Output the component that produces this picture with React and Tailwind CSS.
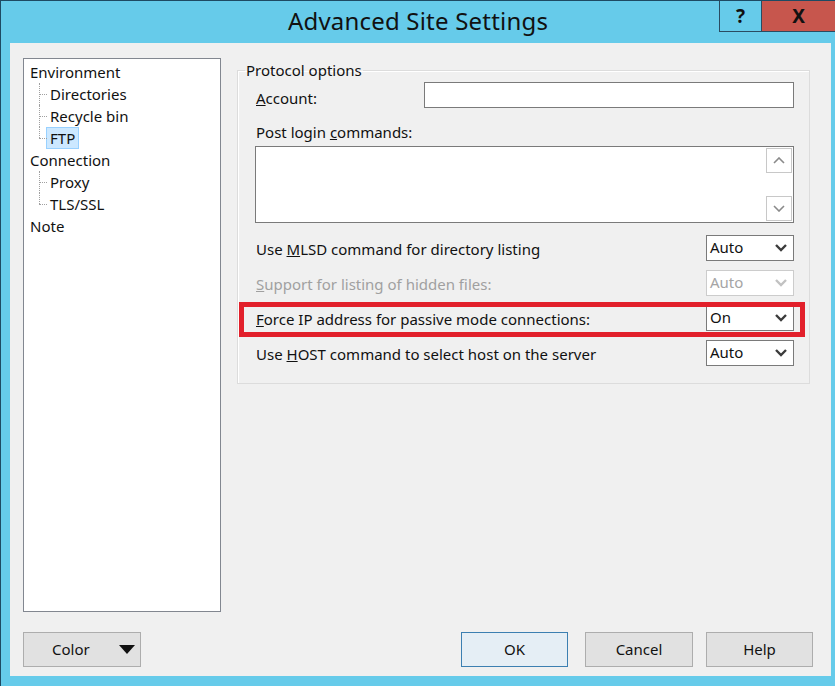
import React from 'react';

const font = { fontFamily: '"Noto Sans", "Open Sans", sans-serif' };

function Chevron({ disabled }) {
  return (
    <svg width="12" height="8" viewBox="0 0 12 8" className="shrink-0">
      <polyline points="1,1 6,6 11,1" fill="none" stroke={disabled ? '#c2c2c2' : '#3c3c3c'} strokeWidth="2.4" />
    </svg>
  );
}

function Select({ value, disabled }) {
  return (
    <div
      className={`w-[88px] h-[26px] bg-white border flex items-center justify-between pl-[3px] pr-[6px] text-[15px] ${
        disabled ? 'border-[#cccccc] text-[#a5a5a5]' : 'border-[#7a7a7a] text-[#111]'
      }`}
    >
      <span className="leading-none -mt-[2px]">{value}</span>
      <Chevron disabled={disabled} />
    </div>
  );
}

function Row({ children, value, disabled, highlight }) {
  return (
    <div className="relative flex items-center justify-between h-[26px]">
      <span className={`pt-[3px] text-[15px] ${disabled ? 'text-[#a0a0a0]' : 'text-[#111]'}`}>{children}</span>
      <Select value={value} disabled={disabled} />
      {highlight && (
        <div className="absolute -left-[17px] -right-[11px] -top-[3px] -bottom-[6px] border-[5px] border-[#e2202b] pointer-events-none" />
      )}
    </div>
  );
}

const tree = [
  { label: 'Environment', level: 0 },
  { label: 'Directories', level: 1 },
  { label: 'Recycle bin', level: 1 },
  { label: 'FTP', level: 1, selected: true, last: true },
  { label: 'Connection', level: 0 },
  { label: 'Proxy', level: 1 },
  { label: 'TLS/SSL', level: 1, last: true },
  { label: 'Note', level: 0 },
];

function TreeItem({ item }) {
  if (item.level === 0) {
    return (
      <div className="h-[22px] flex items-center pl-[6px] text-[15px] text-[#111]">{item.label}</div>
    );
  }
  return (
    <div className="h-[22px] flex items-center">
      <div className="w-[15px] ml-[15px] h-full relative shrink-0">
        <div
          className={`absolute left-0 top-0 border-l border-dotted border-[#a0a0a0] ${item.last ? 'h-[11px]' : 'h-full'}`}
        />
        <div className="absolute left-0 top-[11px] w-[8px] border-t border-dotted border-[#a0a0a0]" />
      </div>
      {item.selected ? (
        <span className="-ml-[8px] px-[3px] h-[22px] flex items-center bg-[#cce8ff] border border-[#99d1ff] text-[15px] text-[#111]">
          {item.label}
        </span>
      ) : (
        <span className="-ml-[4px] text-[15px] text-[#111]">{item.label}</span>
      )}
    </div>
  );
}

function Button({ children, primary, className = '' }) {
  return (
    <div
      className={`h-[35px] flex items-center justify-center border text-[15px] text-[#111] ${
        primary ? 'border-[#3c7fb1] bg-[#e5eef5]' : 'border-[#adadad] bg-[#e1e1e1]'
      } ${className}`}
    >
      {children}
    </div>
  );
}

export default function App() {
  return (
    <div style={font} className="w-[835px] h-[686px] bg-[#66cbea] border-l border-t border-[#1e4a63] flex flex-col overflow-hidden">
      {/* title bar */}
      <div className="h-[42px] grid grid-cols-[1fr_auto_1fr] shrink-0">
        <div />
        <div className="pt-[4px] text-[24px] text-[#111] leading-[32px] tracking-[0.2px]">Advanced Site Settings</div>
        <div className="flex justify-end">
          <div className="w-[43px] h-[32px] -mt-px border border-[#2a4b61] flex items-center justify-center text-[19px] font-bold text-[#111]">
            ?
          </div>
          <div className="w-[73px] h-[32px] -mt-px bg-[#c7564d] border-y border-[#2a4b61] flex items-center justify-center text-[19px] font-bold text-[#111]">
            X
          </div>
        </div>
      </div>

      {/* client */}
      <div className="ml-[9px] mr-[4px] mb-[10px] flex-1 bg-[#f0f0f0] flex flex-col pl-[13px] pt-[15px]">
        <div className="flex gap-[16px]">
          {/* tree */}
          <div className="w-[198px] h-[554px] bg-white border border-[#828790] pt-[2px]">
            {tree.map((item) => (
              <TreeItem key={item.label} item={item} />
            ))}
          </div>

          {/* right */}
          <div className="w-[573px] pt-[2px]">
            <fieldset className="border border-[#dcdcdc] shadow-[inset_1px_1px_0_#fff] pl-[18px] pr-[15px] pb-[17px]">
              <legend className="-ml-[11px] px-[1px] text-[15px] leading-[20px] text-[#111]">Protocol options</legend>
              <div className="pt-[2px] flex items-center justify-between h-[28px]">
                <span className="text-[15px] text-[#111] pt-[6px]">
                  <u>A</u>ccount:
                </span>
                <div className="w-[370px] h-[26px] bg-white border border-[#7a7a7a]" />
              </div>
              <div className="mt-[14px] h-[20px] leading-[20px] text-[15px] text-[#111]">
                Post login <u>c</u>ommands:
              </div>
              <div className="mt-[4px] -ml-px h-[77px] bg-white border border-[#7a7a7a] flex justify-end p-px">
                <div className="w-[26px] h-full flex flex-col">
                  <div className="h-[25px] border border-[#c8c8c8] flex items-center justify-center">
                    <svg width="12" height="7" viewBox="0 0 12 7">
                      <polyline points="1,6 6,1 11,6" fill="none" stroke="#8a8a8a" strokeWidth="1.6" />
                    </svg>
                  </div>
                  <div className="flex-1" />
                  <div className="h-[25px] border border-[#c8c8c8] flex items-center justify-center">
                    <svg width="12" height="7" viewBox="0 0 12 7">
                      <polyline points="1,1 6,6 11,1" fill="none" stroke="#8a8a8a" strokeWidth="1.6" />
                    </svg>
                  </div>
                </div>
              </div>

              <div className="mt-[12px] flex flex-col gap-[9px]">
                <Row value="Auto">
                  Use <u>M</u>LSD command for directory listing
                </Row>
                <Row value="Auto" disabled>
                  <u>S</u>upport for listing of hidden files:
                </Row>
                <Row value="On" highlight>
                  <u>F</u>orce IP address for passive mode connections:
                </Row>
                <Row value="Auto">
                  Use <u>H</u>OST command to select host on the server
                </Row>
              </div>
            </fieldset>
          </div>
        </div>

        {/* bottom buttons */}
        <div className="mt-[20px] flex items-center pr-[18px]">
          <div className="w-[118px] h-[35px] flex items-center border border-[#adadad] bg-[#e1e1e1] text-[15px] text-[#111]">
            <span className="ml-[28px]">Color</span>
            <div className="flex-1" />
            <svg width="16" height="9" viewBox="0 0 16 9" className="mr-[5px]">
              <polygon points="0,0 16,0 8,9" fill="#111" />
            </svg>
          </div>
          <div className="flex-1" />
          <Button primary className="w-[107px]">OK</Button>
          <Button className="w-[108px] ml-[17px]">Cancel</Button>
          <Button className="w-[107px] ml-[13px]">Help</Button>
        </div>
      </div>
    </div>
  );
}
